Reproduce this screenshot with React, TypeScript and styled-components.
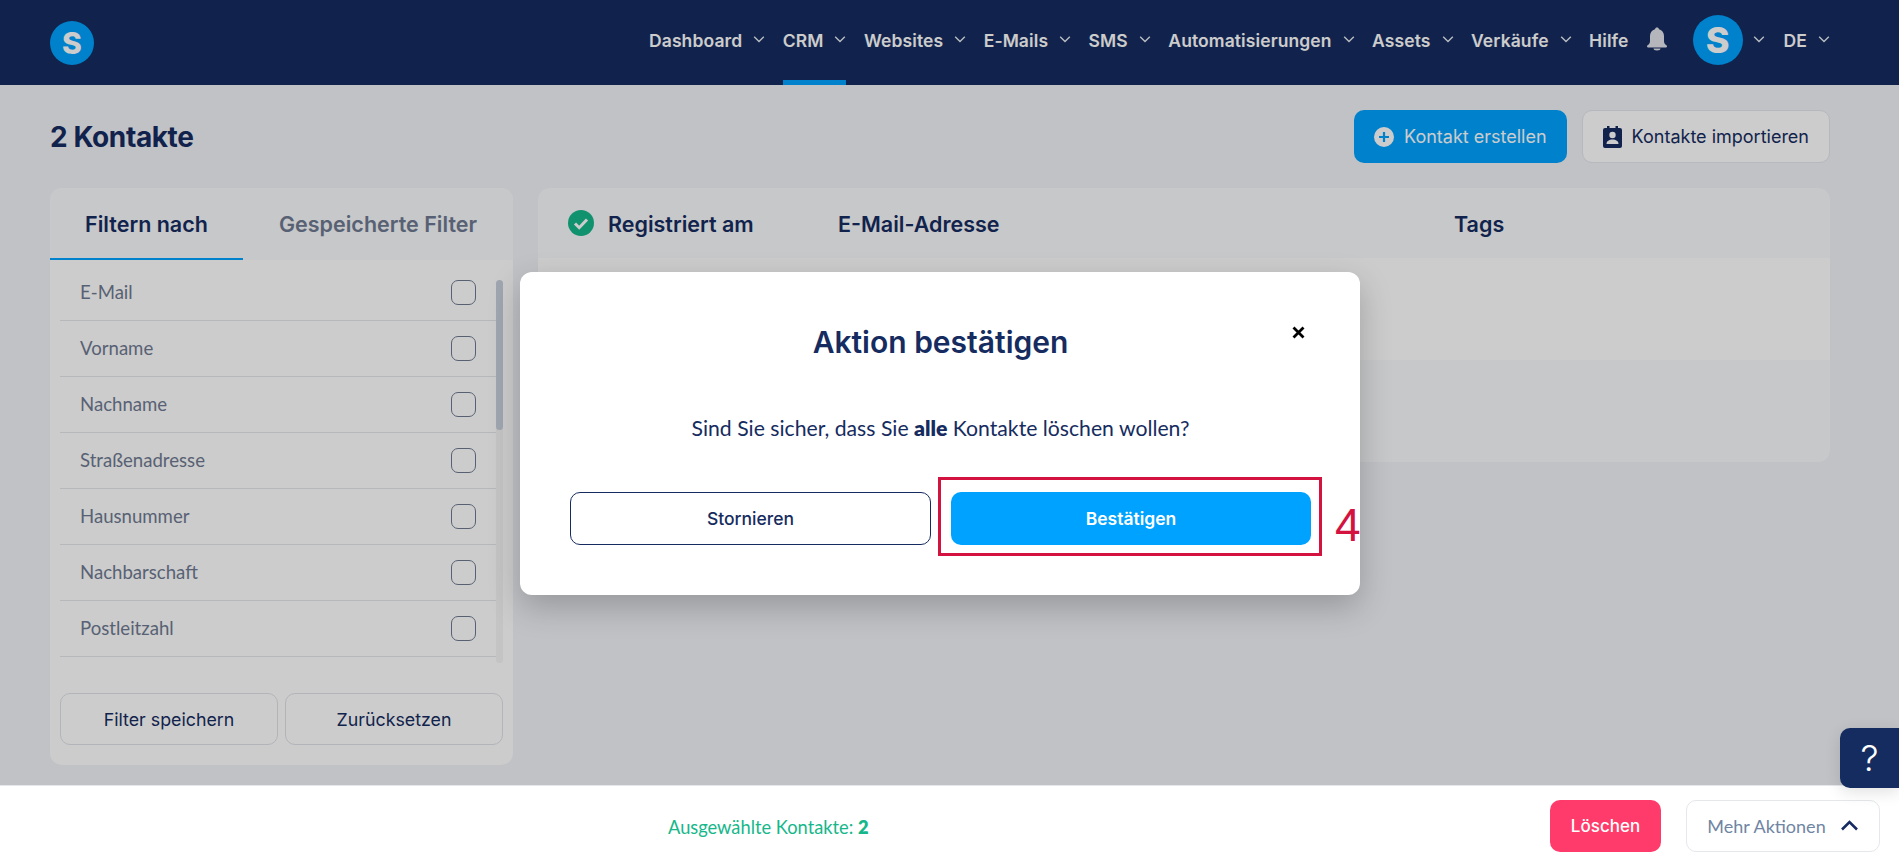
import React from "react";
import styled, { createGlobalStyle } from "styled-components";

const Global = createGlobalStyle`
  html, body { margin: 0; padding: 0; height: 100%; }
  body { font-family: Inter, "Liberation Sans", sans-serif; background: #f1f3f8; color: #162c60; overflow: hidden; }
  * { box-sizing: border-box; }
`;

const Page = styled.div`
  width: 1899px;
  height: 865px;
  display: flex;
  flex-direction: column;
  position: relative;
  overflow: hidden;
  background: #f1f3f8;
`;

const NavBar = styled.header`
  height: 85px;
  flex: none;
  background: #162c60;
  display: flex;
  align-items: stretch;
  justify-content: space-between;
  padding: 0 69px 0 50px;
`;

const LogoWrap = styled.div`
  display: flex;
  align-items: center;
  height: 85px;
`;

const Circle = styled.div<{ $size: number; $font: number }>`
  width: ${(p) => p.$size}px;
  height: ${(p) => p.$size}px;
  border-radius: 50%;
  background: #00a2ff;
  color: #fff;
  font-family: Inter, sans-serif;
  font-weight: 800;
  font-size: ${(p) => p.$font}px;
  line-height: 1;
  display: flex;
  align-items: center;
  justify-content: center;
  flex: none;
`;

const NavList = styled.nav`
  display: flex;
  align-items: stretch;
  gap: 17.5px;
`;

const NavItem = styled.div<{ $active?: boolean }>`
  display: flex;
  align-items: center;
  gap: 11px;
  height: 85px;
  padding-top: 3px;
  padding-bottom: 2px;
  color: #fff;
  font-weight: 600;
  font-size: 17.5px;
  letter-spacing: 0.1px;
  border-bottom: 5px solid ${(p) => (p.$active ? "#00a2ff" : "transparent")};
`;

const ChevronIcon = styled.svg`
  width: 12px;
  height: 7px;
  fill: none;
  stroke: #e8ebf1;
  stroke-width: 1.4;
  flex: none;
  margin-top: -2px;
`;

const Chevron = () => (
  <ChevronIcon viewBox="0 0 11 7">
    <path d="M0.7 0.8 L5.5 5.6 L10.3 0.8" />
  </ChevronIcon>
);

const BellIcon = styled.svg`
  width: 22px;
  height: 24px;
  fill: #e1e4ea;
  margin: -4px 3px 0 0;
`;

const AvatarGroup = styled.div`
  display: flex;
  align-items: center;
  gap: 10px;
  height: 85px;
  margin: 0 1.5px 0 4px;
  padding-bottom: 5px;
`;

const Main = styled.main`
  flex: 1;
  padding: 25px 69px 0 50px;
  display: flex;
  flex-direction: column;
  gap: 25px;
`;

const TitleRow = styled.div`
  display: flex;
  align-items: center;
  justify-content: space-between;
  height: 53px;
`;

const Title = styled.h1`
  margin: 0;
  font-size: 28px;
  font-weight: 700;
  color: #162c60;
  letter-spacing: -0.4px;
`;

const Actions = styled.div`
  display: flex;
  gap: 15px;
`;

const ActionButton = styled.button<{ $primary?: boolean }>`
  height: 53px;
  padding: 0 20px;
  border-radius: 10px;
  border: ${(p) => (p.$primary ? "none" : "1px solid #e3e6ec")};
  background: ${(p) => (p.$primary ? "#00a2ff" : "#fff")};
  color: ${(p) => (p.$primary ? "#fff" : "#162c60")};
  font-family: Inter, sans-serif;
  font-size: 18px;
  font-weight: 400;
  display: flex;
  align-items: center;
  gap: 10px;
`;

const Columns = styled.div`
  display: grid;
  grid-template-columns: 463px 1292px;
  gap: 25px;
  align-items: start;
`;

const FilterPanel = styled.aside`
  height: 577px;
  background: #fff;
  border-radius: 12px;
  overflow: hidden;
  display: flex;
  flex-direction: column;
`;

const Tabs = styled.div`
  display: flex;
  height: 72px;
  flex: none;
  background: #f9fafc;
`;

const Tab = styled.div<{ $active?: boolean }>`
  width: ${(p) => (p.$active ? 193 : 270)}px;
  display: flex;
  align-items: center;
  justify-content: center;
  padding-top: 2px;
  font-size: 21.5px;
  font-weight: 600;
  color: ${(p) => (p.$active ? "#162c60" : "#6f7a92")};
  border-bottom: 2px solid ${(p) => (p.$active ? "#00a2ff" : "transparent")};
`;

const ListArea = styled.div`
  margin: 5px 10px 0 10px;
  height: 398px;
  display: grid;
  grid-template-columns: 436px 7px;
  flex: none;
`;

const RowList = styled.div`
  display: flex;
  flex-direction: column;
`;

const FilterRow = styled.div`
  height: 56px;
  flex: none;
  display: flex;
  align-items: center;
  justify-content: space-between;
  padding: 0 20px;
  border-bottom: 1px solid #e4e6ea;
  font-family: Lato, sans-serif;
  font-size: 18.6px;
  color: #6f7a92;
`;

const RowLabel = styled.span`
  margin-top: -2px;
`;

const Check = styled.span`
  width: 25px;
  height: 25px;
  border: 1px solid #6f7a92;
  border-radius: 7px;
  flex: none;
`;

const Scrollbar = styled.div`
  margin-top: 15px;
  height: 383px;
  background: #f5f5f5;
  border-radius: 4px;
`;

const Thumb = styled.div`
  height: 150px;
  background: #c8d0dc;
  border-radius: 4px;
`;

const FilterButtons = styled.div`
  margin: 30px 10px 0;
  display: flex;
  gap: 7px;
`;

const OutlineButton = styled.button`
  flex: 1;
  height: 52px;
  background: transparent;
  border: 1px solid #dfe2e8;
  border-radius: 10px;
  color: #162c60;
  font-family: Inter, sans-serif;
  font-size: 17.8px;
  font-weight: 400;
`;

const TablePanel = styled.section`
  background: #f9fafc;
  border-radius: 12px;
  overflow: hidden;
`;

const TableHead = styled.div`
  height: 70px;
  display: flex;
  align-items: center;
  padding: 2px 0 0 30px;
  font-size: 21.5px;
  font-weight: 600;
  color: #162c60;
`;

const HeadCheck = styled.svg`
  width: 26px;
  height: 26px;
  flex: none;
  margin: -2px 14px 0 0;
`;

const HeadCell = styled.span<{ $width: number }>`
  width: ${(p) => p.$width}px;
  flex: none;
`;

const TableRow = styled.div<{ $shade?: boolean }>`
  height: 102px;
  background: ${(p) => (p.$shade ? "#ffffff" : "transparent")};
`;

const Overlay = styled.div`
  position: absolute;
  inset: 0;
  background: rgba(0, 0, 0, 0.2);
  z-index: 10;
`;

const Modal = styled.div`
  position: absolute;
  left: 520px;
  top: 272px;
  width: 840px;
  height: 323px;
  background: #fff;
  border-radius: 12px;
  box-shadow: 0 12px 32px rgba(0, 0, 0, 0.22);
  z-index: 20;
  padding: 0 49px 0 50px;
  display: flex;
  flex-direction: column;
  align-items: stretch;
  overflow: hidden;
`;

const ModalTitle = styled.h2`
  margin: 48px 0 0;
  height: 44px;
  line-height: 44px;
  text-align: center;
  font-size: 30px;
  font-weight: 600;
  color: #162c60;
`;

const ModalMessage = styled.p`
  margin: 49px 0 0;
  height: 30px;
  line-height: 30px;
  text-align: center;
  font-family: Lato, sans-serif;
  font-size: 21.2px;
  color: #162c60;
  b { font-weight: 800; }
`;

const ModalButtons = styled.div`
  margin-top: 49px;
  display: grid;
  grid-template-columns: 361px 360px;
  gap: 20px;
`;

const ModalButton = styled.button<{ $primary?: boolean }>`
  height: 53px;
  border-radius: 10px;
  border: ${(p) => (p.$primary ? "none" : "1px solid #162c60")};
  background: ${(p) => (p.$primary ? "#00a2ff" : "#fff")};
  color: ${(p) => (p.$primary ? "#fff" : "#162c60")};
  font-family: Inter, sans-serif;
  font-size: 17.5px;
  font-weight: ${(p) => (p.$primary ? 600 : 500)};
`;

const CloseIcon = styled.svg`
  position: absolute;
  left: 772px;
  top: 54px;
  width: 13px;
  height: 13px;
  stroke: #000;
  stroke-width: 2.8;
  fill: none;
`;

const Highlight = styled.div`
  position: absolute;
  left: 418px;
  top: 205px;
  width: 384px;
  height: 79px;
  border: 3px solid #d3123f;
`;

const StepNumber = styled.span`
  position: absolute;
  left: 815px;
  top: 226px;
  font-family: "Liberation Sans", sans-serif;
  font-size: 46px;
  line-height: 54px;
  color: #d3123f;
`;

const Footer = styled.footer`
  position: absolute;
  left: 0;
  right: 0;
  bottom: 0;
  height: 80px;
  background: #fff;
  border-top: 1px solid #e5e7eb;
  z-index: 30;
  display: flex;
  align-items: center;
  padding: 0 19px 0 668px;
`;

const Selected = styled.div`
  font-family: Lato, sans-serif;
  font-size: 18.3px;
  color: #16b78a;
  margin: 2px auto 0 0;
  b { font-weight: 800; }
`;

const DeleteButton = styled.button`
  width: 111px;
  height: 52px;
  border: none;
  border-radius: 10px;
  background: #ff3b6b;
  color: #fff;
  font-family: Inter, sans-serif;
  font-size: 17px;
  font-weight: 500;
  margin-right: 25px;
`;

const MoreButton = styled.button`
  width: 194px;
  height: 52px;
  border: 1px solid #e5e7eb;
  border-radius: 10px;
  background: #fff;
  color: #6f85a3;
  font-family: Lato, sans-serif;
  font-size: 18px;
  display: flex;
  align-items: center;
  justify-content: center;
  gap: 14px;
`;

const UpIcon = styled.svg`
  width: 19px;
  height: 11px;
  fill: none;
  stroke: #162c60;
  stroke-width: 2.6;
`;

const Help = styled.button`
  position: absolute;
  right: 0;
  top: 728px;
  width: 59px;
  height: 60px;
  border: none;
  border-radius: 10px 0 0 10px;
  background: #152c60;
  color: #fff;
  font-family: Inter, sans-serif;
  font-size: 36px;
  font-weight: 300;
  z-index: 40;
  box-shadow: 0 4px 16px rgba(0, 0, 0, 0.12);
`;

const navItems = ["Dashboard", "CRM", "Websites", "E-Mails", "SMS", "Automatisierungen", "Assets", "Verkäufe"];
const filters = ["E-Mail", "Vorname", "Nachname", "Straßenadresse", "Hausnummer", "Nachbarschaft", "Postleitzahl"];

export default function App() {
  return (
    <Page>
      <Global />
      <NavBar>
        <LogoWrap>
          <Circle $size={44} $font={30}>S</Circle>
        </LogoWrap>
        <NavList>
          {navItems.map((n) => (
            <NavItem key={n} $active={n === "CRM"}>
              {n}
              <Chevron />
            </NavItem>
          ))}
          <NavItem>Hilfe</NavItem>
          <NavItem>
            <BellIcon viewBox="0 0 22 24">
              <path d="M11 0.5c-1 0-1.8.7-2 1.7C5.8 3 4 5.7 4 9v5.2c0 1.6-.9 3-2.2 3.9-.6.4-.8.9-.8 1.4 0 .5.4.9 1 .9h18c.6 0 1-.4 1-.9 0-.5-.2-1-.8-1.4-1.3-.9-2.2-2.3-2.2-3.9V9c0-3.3-1.8-6-5-6.8-.2-1-1-1.7-2-1.7z" />
              <path d="M7.5 21.5h7c0 1.2-1.2 2-3.5 2s-3.5-.8-3.5-2z" />
            </BellIcon>
          </NavItem>
          <AvatarGroup>
            <Circle $size={50} $font={36}>S</Circle>
            <Chevron />
          </AvatarGroup>
          <NavItem>
            DE
            <Chevron />
          </NavItem>
        </NavList>
      </NavBar>
      <Main>
        <TitleRow>
          <Title>2 Kontakte</Title>
          <Actions>
            <ActionButton $primary>
              <svg width="20" height="20" viewBox="0 0 20 20">
                <circle cx="10" cy="10" r="10" fill="#fff" />
                <path d="M10 5v10M5 10h10" stroke="#00a2ff" strokeWidth="2.2" />
              </svg>
              Kontakt erstellen
            </ActionButton>
            <ActionButton>
              <svg width="19" height="22" viewBox="0 0 19 22">
                <path d="M4 0h2.5v2h6V0H15v2h2a2 2 0 0 1 2 2v16a2 2 0 0 1-2 2H2a2 2 0 0 1-2-2V4a2 2 0 0 1 2-2h2z" fill="#162c60" />
                <circle cx="9.5" cy="9" r="3.2" fill="#fff" />
                <path d="M3.5 18c0-3 2.6-4.5 6-4.5s6 1.5 6 4.5z" fill="#fff" />
              </svg>
              Kontakte importieren
            </ActionButton>
          </Actions>
        </TitleRow>
        <Columns>
          <FilterPanel>
            <Tabs>
              <Tab $active>Filtern nach</Tab>
              <Tab>Gespeicherte Filter</Tab>
            </Tabs>
            <ListArea>
              <RowList>
                {filters.map((f) => (
                  <FilterRow key={f}>
                    <RowLabel>{f}</RowLabel>
                    <Check />
                  </FilterRow>
                ))}
              </RowList>
              <Scrollbar>
                <Thumb />
              </Scrollbar>
            </ListArea>
            <FilterButtons>
              <OutlineButton>Filter speichern</OutlineButton>
              <OutlineButton>Zurücksetzen</OutlineButton>
            </FilterButtons>
          </FilterPanel>
          <TablePanel>
            <TableHead>
              <HeadCheck viewBox="0 0 26 26">
                <circle cx="13" cy="13" r="13" fill="#16b78a" />
                <path d="M7 13.5l4.2 4.2L19 9.5" fill="none" stroke="#fff" strokeWidth="3" />
              </HeadCheck>
              <HeadCell $width={230}>Registriert am</HeadCell>
              <HeadCell $width={616}>E-Mail-Adresse</HeadCell>
              <HeadCell $width={100}>Tags</HeadCell>
            </TableHead>
            <TableRow $shade />
            <TableRow />
          </TablePanel>
        </Columns>
      </Main>
      <Overlay />
      <Modal>
        <ModalTitle>Aktion bestätigen</ModalTitle>
        <ModalMessage>
          Sind Sie sicher, dass Sie <b>alle</b> Kontakte löschen wollen?
        </ModalMessage>
        <ModalButtons>
          <ModalButton>Stornieren</ModalButton>
          <ModalButton $primary>Bestätigen</ModalButton>
        </ModalButtons>
        <CloseIcon viewBox="0 0 13 13">
          <path d="M1.5 1.5l10 10M11.5 1.5l-10 10" />
        </CloseIcon>
        <Highlight />
        <StepNumber>4</StepNumber>
      </Modal>
      <Footer>
        <Selected>
          Ausgewählte Kontakte: <b>2</b>
        </Selected>
        <DeleteButton>Löschen</DeleteButton>
        <MoreButton>
          Mehr Aktionen
          <UpIcon viewBox="0 0 18 11">
            <path d="M1.5 9.5L9 2l7.5 7.5" />
          </UpIcon>
        </MoreButton>
      </Footer>
      <Help>?</Help>
    </Page>
  );
}
